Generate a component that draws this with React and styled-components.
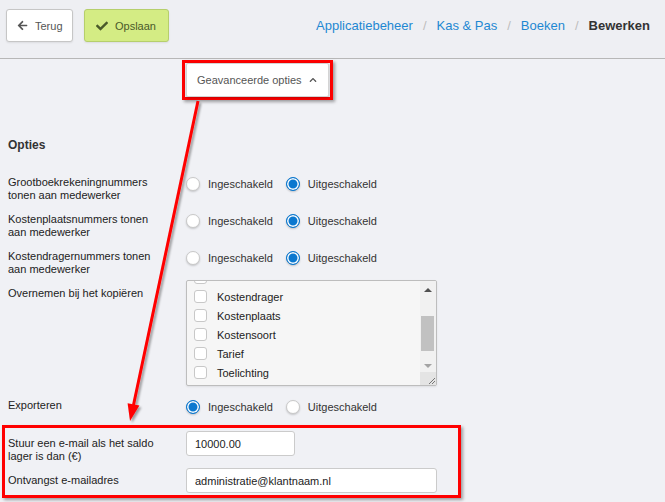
import React from 'react';
import styled, { createGlobalStyle } from 'styled-components';
import { FaArrowLeft, FaCheck, FaChevronUp } from 'react-icons/fa';

const GlobalStyle = createGlobalStyle`
  html, body {
    margin: 0;
    padding: 0;
  }
  body {
    background: #f0f1f5;
    font-family: "Liberation Sans", Arial, sans-serif;
    color: #222;
  }
  * {
    box-sizing: border-box;
  }
`;

const Page = styled.div`
  position: relative;
  width: 665px;
  height: 502px;
  overflow: hidden;
  background: #f0f1f5;
`;

const Header = styled.header`
  display: flex;
  align-items: flex-start;
  height: 59px;
  padding: 9px 15px 0 6px;
  background: #eeeff3;
  border-bottom: 1px solid #b7b7b7;
`;

const ToolButton = styled.button`
  display: flex;
  align-items: center;
  gap: ${(p) => p.$gap}px;
  height: 33px;
  width: ${(p) => p.$width}px;
  margin-left: ${(p) => p.$ml || 0}px;
  padding: 0 0 0 ${(p) => p.$pl}px;
  font-family: inherit;
  font-size: 11px;
  border-radius: 3px;
  border: 1px solid ${(p) => (p.$primary ? '#b6cf6c' : '#c6c6c6')};
  background: ${(p) => (p.$primary ? '#d4ec84' : '#fff')};
  color: ${(p) => (p.$primary ? '#4a5a2a' : '#555')};
  box-shadow: 0 1px 2px rgba(0, 0, 0, 0.08);
  cursor: pointer;
`;

const Crumbs = styled.nav`
  display: flex;
  margin-left: auto;
  line-height: 33px;
  font-size: 13px;
`;

const Crumb = styled.a`
  color: ${(p) => (p.$current ? '#333' : '#1e88d2')};
  font-weight: ${(p) => (p.$current ? 700 : 400)};
  text-decoration: none;
`;

const Sep = styled.span`
  color: #bdbdbd;
  margin: 0 10px;
`;

const AdvancedRow = styled.div`
  padding: 1px 0 0 182px;
`;

const RedFrame = styled.div`
  display: ${(p) => (p.$block ? 'block' : 'inline-block')};
  border: 3px solid #ff0000;
  box-shadow: 2px 2px 3px rgba(0, 0, 0, 0.35);
`;

const AdvancedFrame = styled(RedFrame)`
  padding: 0 1px;
`;

const AdvancedButton = styled.button`
  display: flex;
  align-items: center;
  justify-content: space-between;
  width: 143px;
  height: 34px;
  padding: 0 11px 0 10px;
  background: #fff;
  border: 1px solid #d4d4d4;
  border-radius: 2px;
  box-shadow: 0 1px 3px rgba(0, 0, 0, 0.25);
  font-family: inherit;
  font-size: 11px;
  color: #555;
`;

const Heading = styled.h3`
  margin: 38px 0 0 8px;
  font-size: 12px;
  line-height: 14px;
  font-weight: 700;
  color: #333;
`;

const Section = styled.div`
  padding-left: 8px;
`;

const FormRow = styled.div`
  display: grid;
  grid-template-columns: 178px 1fr;
  align-items: start;
  margin-top: ${(p) => p.$mt || 0}px;
`;

const Label = styled.div`
  font-size: 11px;
  line-height: 13px;
  padding-top: ${(p) => p.$pt || 0}px;
  color: #222;
`;

const RadioGroup = styled.div`
  display: flex;
  margin-top: 1px;
`;

const RadioOption = styled.label`
  display: inline-flex;
  align-items: center;
  gap: 8px;
  margin-right: 13px;
  font-size: 11px;
  line-height: 13px;
  color: #333;
`;

const RadioDot = styled.span`
  display: inline-block;
  width: 14px;
  height: 14px;
  border-radius: 50%;
  border: 1px solid ${(p) => (p.$checked ? '#0b78cf' : '#c9c9c9')};
  background: ${(p) => (p.$checked ? '#0b78cf' : '#fff')};
  box-shadow: ${(p) =>
    p.$checked
      ? 'inset 0 0 0 1.5px #fff, 0 1px 2px rgba(0,0,0,0.2)'
      : '0 1px 2px rgba(0,0,0,0.18)'};
`;

const ListBox = styled.div`
  display: flex;
  width: 251px;
  height: 106px;
  border: 1px solid #bdbdbd;
  border-radius: 2px;
  background: #f6f6f6;
  box-shadow: 0 1px 2px rgba(0, 0, 0, 0.08);
  overflow: hidden;
`;

const Viewport = styled.div`
  flex: 1;
  overflow: hidden;
  padding-left: 7px;
`;

const Items = styled.div`
  margin-top: -13px;
`;

const Item = styled.div`
  display: flex;
  align-items: center;
  gap: 10px;
  height: 19px;
  font-size: 11px;
  color: #222;
`;

const CheckBox = styled.span`
  display: inline-block;
  width: 13px;
  height: 13px;
  border: 1px solid #c8c8c8;
  border-radius: 3px;
  background: #fff;
`;

const ScrollTrack = styled.div`
  display: flex;
  flex-direction: column;
  width: 16px;
  background: #f1f1f1;
`;

const ArrowCell = styled.div`
  display: flex;
  align-items: center;
  justify-content: center;
  height: ${(p) => p.$h}px;
`;

const Triangle = styled.span`
  width: 0;
  height: 0;
  border-left: 4px solid transparent;
  border-right: 4px solid transparent;
  ${(p) =>
    p.$up ? 'border-bottom: 4px solid #505050;' : 'border-top: 4px solid #a3a3a3;'}
`;

const Gutter = styled.div`
  flex: 1;
  padding: 18px 2px 0 1px;
`;

const Thumb = styled.div`
  height: 35px;
  background: #c1c1c1;
`;

const Grip = styled.div`
  height: 13px;
  background: #e4e4e4;
  display: flex;
  align-items: flex-end;
  justify-content: flex-end;
`;

const BottomFrame = styled(RedFrame)`
  width: 459px;
  margin: 11px 0 0 2px;
  padding: 3px 0 2px 3px;
`;

const TextInput = styled.input`
  width: ${(p) => p.$width}px;
  height: 25px;
  padding: 0 8px;
  border: 1px solid #cbcbcb;
  border-radius: 3px;
  background: #fff;
  font-family: inherit;
  font-size: 11px;
  color: #222;
  outline: none;
`;

const Overlay = styled.svg`
  position: absolute;
  left: 0;
  top: 0;
  pointer-events: none;
`;

function Radios({ on }) {
  return (
    <RadioGroup>
      <RadioOption>
        <RadioDot $checked={on} />
        Ingeschakeld
      </RadioOption>
      <RadioOption>
        <RadioDot $checked={!on} />
        Uitgeschakeld
      </RadioOption>
    </RadioGroup>
  );
}

// first entry is scrolled almost out of view: only its checkbox peeks out
const copyItems = ['', 'Kostendrager', 'Kostenplaats', 'Kostensoort', 'Tarief', 'Toelichting'];

function App() {
  return (
    <Page>
      <GlobalStyle />
      <Header>
        <ToolButton $width={67} $pl={10} $gap={7}>
          <FaArrowLeft size={11} color="#555" />
          Terug
        </ToolButton>
        <ToolButton $primary $width={85} $pl={11} $gap={7} $ml={11}>
          <FaCheck size={12} color="#4a5a2a" />
          Opslaan
        </ToolButton>
        <Crumbs>
          <Crumb href="#">Applicatiebeheer</Crumb>
          <Sep>/</Sep>
          <Crumb href="#">Kas &amp; Pas</Crumb>
          <Sep>/</Sep>
          <Crumb href="#">Boeken</Crumb>
          <Sep>/</Sep>
          <Crumb $current>Bewerken</Crumb>
        </Crumbs>
      </Header>

      <AdvancedRow>
        <AdvancedFrame>
          <AdvancedButton>
            Geavanceerde opties
            <FaChevronUp size={8} color="#555" />
          </AdvancedButton>
        </AdvancedFrame>
      </AdvancedRow>

      <Heading>Opties</Heading>

      <Section>
        <FormRow $mt={24}>
          <Label>Grootboekrekeningnummers<br />tonen aan medewerker</Label>
          <Radios on={false} />
        </FormRow>
        <FormRow $mt={11}>
          <Label>Kostenplaatsnummers tonen<br />aan medewerker</Label>
          <Radios on={false} />
        </FormRow>
        <FormRow $mt={11}>
          <Label>Kostendragernummers tonen<br />aan medewerker</Label>
          <Radios on={false} />
        </FormRow>
        <FormRow $mt={4}>
          <Label $pt={7}>Overnemen bij het kopiëren</Label>
          <ListBox>
            <Viewport>
              <Items>
                {copyItems.map((name, i) => (
                  <Item key={i}>
                    <CheckBox />
                    {name}
                  </Item>
                ))}
              </Items>
            </Viewport>
            <ScrollTrack>
              <ArrowCell $h={17}><Triangle $up /></ArrowCell>
              <Gutter><Thumb /></Gutter>
              <ArrowCell $h={12}><Triangle /></ArrowCell>
              <Grip>
                <svg width="10" height="10" viewBox="0 0 10 10">
                  <path d="M9 3 L3 9 M9 6 L6 9" stroke="#777" strokeWidth="1" />
                </svg>
              </Grip>
            </ScrollTrack>
          </ListBox>
        </FormRow>
        <FormRow $mt={13}>
          <Label>Exporteren</Label>
          <Radios on={true} />
        </FormRow>
      </Section>

      <BottomFrame $block>
        <FormRow>
          <Label $pt={6}>Stuur een e-mail als het saldo<br />lager is dan (€)</Label>
          <TextInput $width={109} defaultValue="10000.00" />
        </FormRow>
        <FormRow $mt={5}>
          <Label $pt={6}>Ontvangst e-mailadres</Label>
          <TextInput $width={251} defaultValue="administratie@klantnaam.nl" />
        </FormRow>
      </BottomFrame>

      <Overlay width="665" height="502" viewBox="0 0 665 502">
        <defs>
          <filter id="arrowShadow" x="-20%" y="-5%" width="160%" height="115%">
            <feDropShadow dx="2" dy="2" stdDeviation="1.2" floodColor="#000" floodOpacity="0.35" />
          </filter>
        </defs>
        <g filter="url(#arrowShadow)">
          <line x1="198" y1="101" x2="133.5" y2="405" stroke="#ff0000" strokeWidth="3" />
          <polygon points="130,421 139.4,405.6 127.6,403.2" fill="#ff0000" />
        </g>
      </Overlay>
    </Page>
  );
}

export default App;
